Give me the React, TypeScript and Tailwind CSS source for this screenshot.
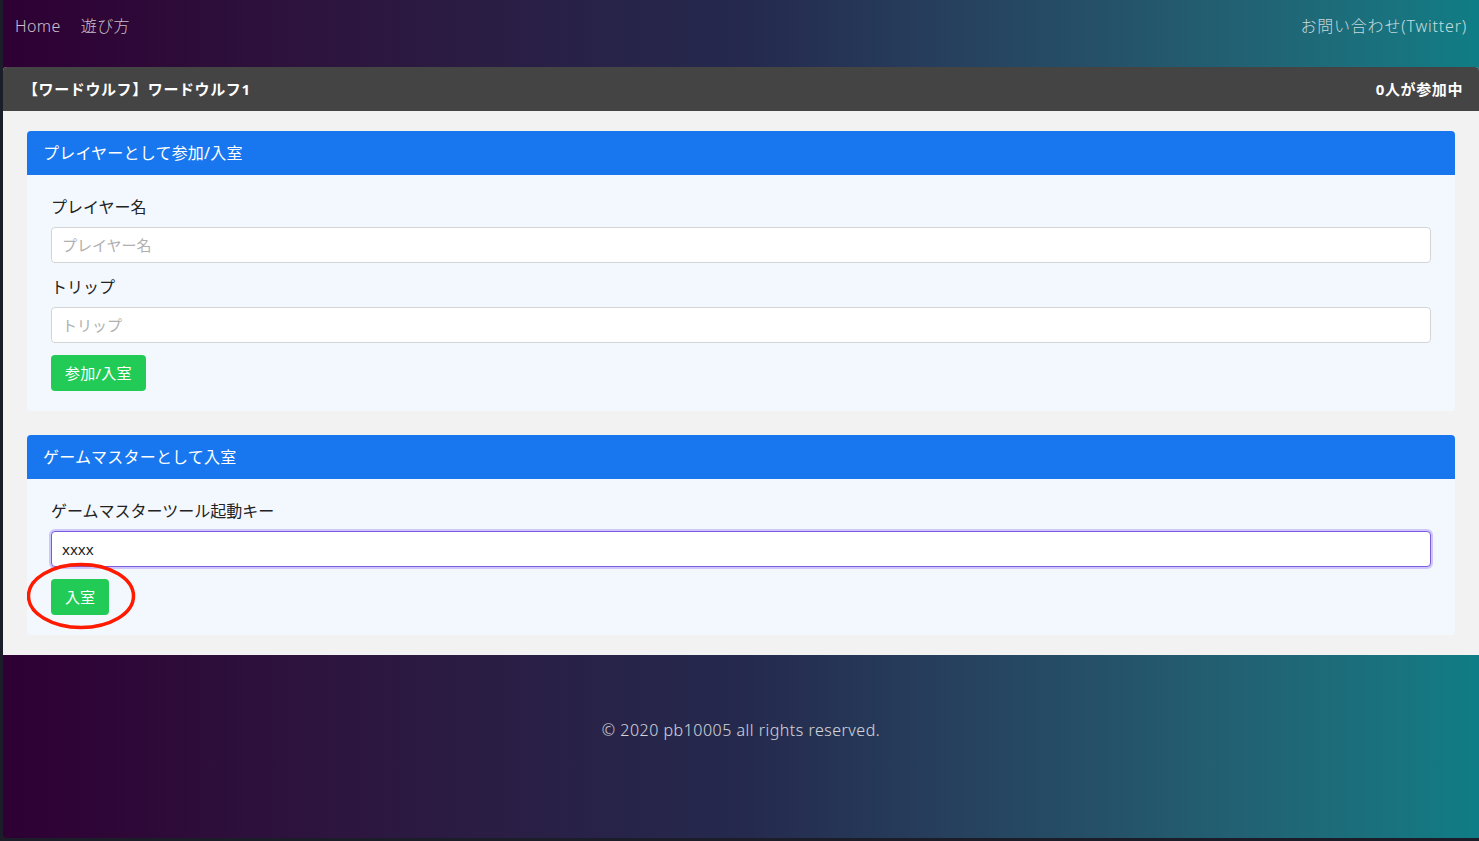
import React from "react";

const font = { fontFamily: '"Noto Sans", "Noto Sans CJK JP", sans-serif' };

function Field({ label, placeholder, value, focused }: { label: string; placeholder: string; value?: string; focused?: boolean }) {
  return (
    <div className="flex flex-col">
      <label className="text-[16px] leading-6 text-[#222] mb-2">{label}</label>
      <input
        readOnly
        placeholder={placeholder}
        defaultValue={value}
        className={
          "h-9 w-full rounded-[4px] bg-white px-[10px] text-[15px] text-[#222] placeholder:text-[#b0b0b0] outline-none " +
          (focused
            ? "border border-[#7b5ce0] shadow-[0_0_0_2px_rgba(140,110,240,0.35)]"
            : "border border-[#d4d4d4]")
        }
        style={font}
      />
    </div>
  );
}

export default function App() {
  return (
    <div className="min-h-[841px] bg-[#1b1e29] pl-[3px] pb-[3px]" style={font}>
      <div className="min-h-[838px] rounded-bl-[4px] bg-gradient-to-r from-[#2e0033] via-[#24294d] to-[#0f7d85] flex flex-col">
        <nav className="h-[67px] flex items-start justify-between pt-[14px] pl-[12px] pr-[12px] text-[16px] leading-6 font-light tracking-[0.4px] text-white/75">
          <div className="flex items-center gap-[20px]">
            <span>Home</span>
            <span>遊び方</span>
          </div>
          <span className="tracking-[0.8px]">お問い合わせ(Twitter)</span>
        </nav>
        <div className="bg-[#f2f2f2] rounded-t-[4px] overflow-hidden">
          <div className="h-[44px] bg-[#444444] flex items-center justify-between pl-[20px] pr-[16px] text-white font-bold text-[15px] tracking-[0.6px]">
            <span>【ワードウルフ】ワードウルフ1</span>
            <span>0人が参加中</span>
          </div>
          <div className="px-[24px] pt-[20px] pb-[20px] flex flex-col gap-[24px]">
            <section className="rounded-[4px] overflow-hidden bg-[#f3f8fe]">
              <div className="h-[44px] bg-[#1877ee] flex items-center px-4 text-white text-[16px] tracking-[0.2px]">プレイヤーとして参加/入室</div>
              <div className="px-[24px] pt-[20px] pb-[20px] flex flex-col gap-[12px]">
                <Field label="プレイヤー名" placeholder="プレイヤー名" />
                <Field label="トリップ" placeholder="トリップ" />
                <div>
                  <button className="h-9 px-[14px] rounded-[4px] bg-[#21cb55] text-white text-[15px] tracking-[0.2px]">参加/入室</button>
                </div>
              </div>
            </section>
            <section className="rounded-[4px] overflow-hidden bg-[#f3f8fe]">
              <div className="h-[44px] bg-[#1877ee] flex items-center px-4 text-white text-[16px] tracking-[0.2px]">ゲームマスターとして入室</div>
              <div className="px-[24px] pt-[20px] pb-[20px] flex flex-col gap-[12px]">
                <Field label="ゲームマスターツール起動キー" placeholder="" value="xxxx" focused />
                <div className="relative">
                  <button className="h-9 px-[14px] rounded-[4px] bg-[#21cb55] text-white text-[15px]">入室</button>
                  <svg className="absolute left-[-26px] top-[-18px] pointer-events-none" width="112" height="70" viewBox="0 0 112 70">
                    <ellipse cx="56" cy="35" rx="52.5" ry="31.5" fill="none" stroke="#ff1a00" strokeWidth="3.5" />
                  </svg>
                </div>
              </div>
            </section>
          </div>
        </div>
        <footer className="flex-1 flex items-start justify-center pt-[63px] text-[16px] font-light tracking-[0.5px] text-white/80">
          © 2020 pb10005 all rights reserved.
        </footer>
      </div>
    </div>
  );
}
